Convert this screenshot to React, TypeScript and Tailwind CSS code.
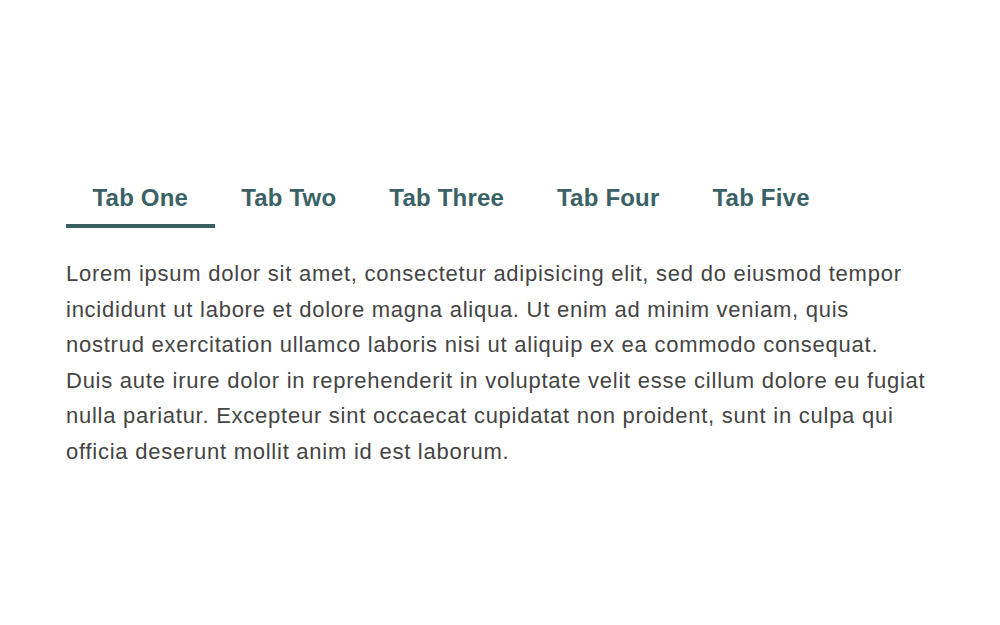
import React, { useState } from "react";

const tabs = ["Tab One", "Tab Two", "Tab Three", "Tab Four", "Tab Five"];

export default function App() {
  const [active, setActive] = useState(0);
  return (
    <div className="min-h-screen bg-white" style={{ fontFamily: '"Liberation Sans", Arial, sans-serif' }}>
      <div className="pl-[66px] pt-[181px] w-[934px]">
        <div className="flex">
          {tabs.map((t, i) => (
            <button
              key={t}
              onClick={() => setActive(i)}
              className={`px-[26.5px] pt-0 pb-[10px] text-[24px] leading-[33px] font-bold tracking-[0.2px] text-[#3a6266] border-b-4 ${
                i === active ? "border-[#3a5f63]" : "border-transparent"
              }`}
            >
              {t}
            </button>
          ))}
        </div>
        <p className="mt-[28px] w-[866px] text-[22px] leading-[35.6px] tracking-[0.75px] text-[#444444]">
          Lorem ipsum dolor sit amet, consectetur adipisicing elit, sed do eiusmod tempor incididunt ut labore et dolore magna aliqua. Ut enim ad minim veniam, quis nostrud exercitation ullamco laboris nisi ut aliquip ex ea commodo consequat. Duis aute irure dolor in reprehenderit in voluptate velit esse cillum dolore eu fugiat nulla pariatur. Excepteur sint occaecat cupidatat non proident, sunt in culpa qui officia deserunt mollit anim id est laborum.
        </p>
      </div>
    </div>
  );
}
